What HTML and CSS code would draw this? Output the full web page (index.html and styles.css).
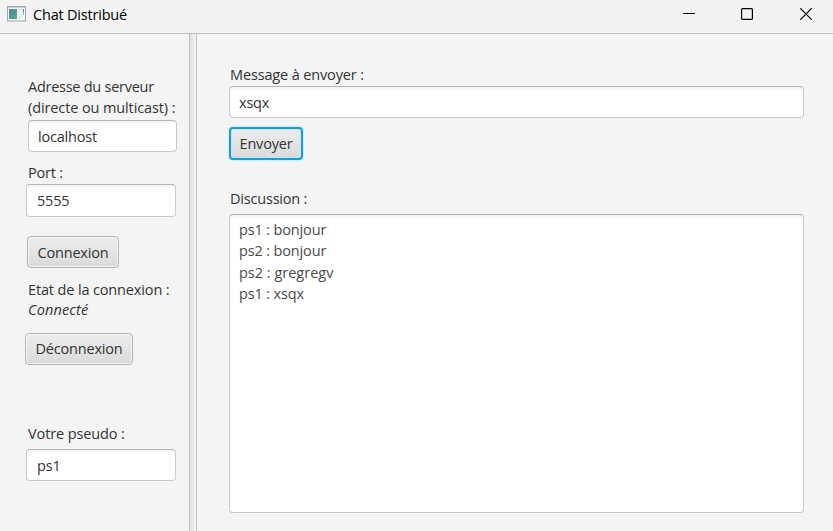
FILE: index.html
```html
<!DOCTYPE html>
<html lang="fr">
<head>
<meta charset="utf-8">
<title>Chat Distribué</title>
<link rel="stylesheet" href="styles.css">
</head>
<body>
<div class="window">
  <header class="titlebar">
    <svg class="app-icon" width="19" height="16" viewBox="0 0 19 16">
      <defs><linearGradient id="pane" x1="0" y1="0" x2="1" y2="1"><stop offset="0" stop-color="#4c86a8"/><stop offset="1" stop-color="#55ad78"/></linearGradient></defs>
      <rect x=".5" y=".5" width="18" height="14.5" fill="#f5f5f5" stroke="#9ba6b0"/>
      <path d="M1 1.5h17" stroke="#c9d0d5"/>
      <rect x="2" y="3" width="8" height="10" fill="url(#pane)"/>
      <rect x="11.5" y="3" width="4" height="10" fill="#e9ebec"/>
      <path d="M16.5 3v3" stroke="#4f83b5"/><path d="M16.5 6v3" stroke="#8bc5a0"/>
    </svg>
    <h1 class="title">Chat Distribué</h1>
    <div class="controls">
      <svg width="12" height="12" viewBox="0 0 12 12"><path d="M0 5.5h12" stroke="#000"/></svg>
      <svg width="12" height="12" viewBox="0 0 12 12"><rect x=".6" y=".6" width="10.8" height="10.8" rx="1" fill="none" stroke="#000" stroke-width="1.2"/></svg>
      <svg width="12" height="12" viewBox="0 0 12 12"><path d="M.3.3l11.4 11.4M11.7.3L.3 11.7" stroke="#000" stroke-width="1.2"/></svg>
    </div>
  </header>
  <div class="split">
    <aside class="sidebar">
      <label class="label server-label">Adresse du serveur<br><span class="second">(directe ou multicast) :</span></label>
      <div class="field server">localhost</div>
      <label class="label port-label">Port :</label>
      <div class="field port">5555</div>
      <button class="button connect">Connexion</button>
      <p class="label state">Etat de la connexion :</p>
      <p class="label status">Connecté</p>
      <button class="button disconnect">Déconnexion</button>
      <label class="label pseudo-label">Votre pseudo :</label>
      <div class="field pseudo">ps1</div>
    </aside>
    <div class="divider"></div>
    <main class="main">
      <label class="label message-label">Message à envoyer :</label>
      <div class="field message">xsqx</div>
      <button class="button send">Envoyer</button>
      <label class="label talk-label">Discussion :</label>
      <div class="talk">
        <p>ps1 : bonjour</p>
        <p>ps2 : bonjour</p>
        <p class="wide">ps2 : gregregv</p>
        <p>ps1 : xsqx</p>
      </div>
    </main>
  </div>
</div>
</body>
</html>
```
FILE: styles.css
```css
* { box-sizing: border-box; }
body {
  margin: 0;
  background: #f3f3f3;
  color: #333;
  font: 14.5px/20px "Open Sans", "Noto Sans", sans-serif;
  letter-spacing: -0.2px;
}
h1, p { margin: 0; font-weight: 400; }
.window { width: 833px; height: 531px; display: flex; flex-direction: column; overflow: hidden; }
.titlebar {
  height: 34px;
  flex: none;
  display: flex;
  align-items: flex-start;
  border-bottom: 1px solid #c5c5c5;
  padding: 6px 21px 0 7px;
}
.title { margin-left: 7px; margin-top: -1px; font-size: 14.5px; line-height: 20px; color: #000; }
.controls { display: flex; gap: 47px; margin-left: auto; margin-top: 2px; }
.controls svg { display: block; }
.controls svg:first-child { margin-right: -1px; }
.split { flex: 1; min-height: 0; display: flex; background: #f4f4f4; }
.sidebar { width: 189px; flex: none; padding: 42px 0 0 28px; display: flex; flex-direction: column; align-items: flex-start; }
.divider { width: 8px; flex: none; border: solid #c2c2c2; border-width: 0 1px; background: linear-gradient(90deg, #e0e0e0, #f3f3f3); }
.main { flex: 1; padding: 31px 29px 18px 32px; display: flex; flex-direction: column; align-items: flex-start; }
.label { display: block; white-space: nowrap; }
.field {
  width: 150px;
  height: 32px;
  padding: 6px 10px 0;
  border: 1px solid #c8c8c8;
  border-top-color: #b8b8b8;
  border-radius: 4px;
  background: linear-gradient(#f0f0f0, #fff 4px);
}
.server-label { line-height: 21px; letter-spacing: -0.26px; }
.second { letter-spacing: -0.11px; }
.server { width: 149px; margin-top: 2px; padding-left: 9px; }
.port-label { margin-top: 11px; }
.port { height: 33px; margin: 1px 0 0 -2px; }
.button {
  height: 32px;
  padding: 1px 0 0;
  border: 1px solid #b5b5b5;
  border-radius: 4px;
  background: linear-gradient(#ededed, #dadada);
  box-shadow: inset 0 0 0 1px #f3f3f3;
  color: #333;
  font: inherit;
  letter-spacing: inherit;
}
.connect { width: 92px; margin: 19px 0 0 -1px; }
.state { margin-top: 12px; letter-spacing: -0.14px; }
.status { font-style: italic; letter-spacing: 0.15px; }
.disconnect { width: 108px; margin: 13px 0 0 -3px; padding: 0 0 1px; }
.pseudo-label { margin-top: 59px; letter-spacing: -0.12px; }
.pseudo { margin: 5px 0 0 -2px; }
.message { width: 575px; margin-top: 1px; padding-left: 9px; }
.send {
  width: 74px;
  height: 33px;
  padding: 0;
  margin-top: 9px;
  border: 2px solid #12a1d1;
  box-shadow: inset 0 0 0 1px #c8e3ed, 0 0 2px #8ed2ea;
}
.message-label { margin-left: 1px; letter-spacing: -0.14px; }
.talk-label { margin: 29px 0 0 1px; }
.talk {
  width: 575px;
  flex: 1;
  margin-top: 5px;
  padding: 4px 9px;
  border: 1px solid #c8c8c8;
  border-top-color: #b0b0b0;
  border-radius: 4px;
  background: linear-gradient(#f0f0f0, #fff 4px);
  line-height: 21.4px;
  letter-spacing: -0.15px;
  color: #4a4a4a;
}
.wide { letter-spacing: 0; }
```
